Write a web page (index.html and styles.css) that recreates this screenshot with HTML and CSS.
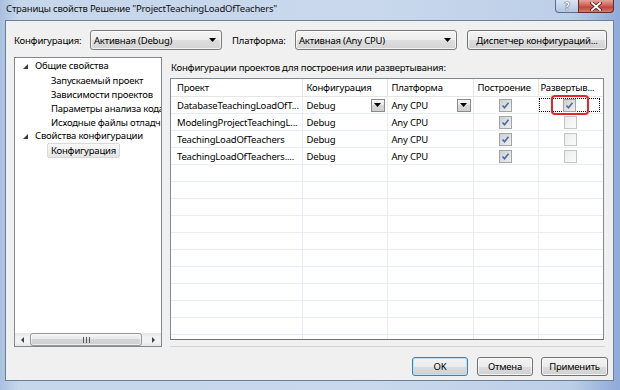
FILE: index.html
```html
<!DOCTYPE html>
<html lang="ru">

<head>
    <meta charset="UTF-8">
    <meta name="viewport" content="width=device-width, initial-scale=1.0">
    <title>Страницы свойств</title>
    <link rel="stylesheet" href="styles.css">
</head>

<body>
    <div class="window">
        <div class="titlebar">
            <span class="title">Страницы свойств Решение "ProjectTeachingLoadOfTeachers"</span>
            <div class="caption">
                <span class="cap-btn cap-help">?</span>
                <span class="cap-btn cap-close">
                    <svg width="12" height="9" viewBox="0 0 12 9">
                        <path d="M2 1 L10 8 M10 1 L2 8" stroke="#4a1f1a" stroke-width="3.4" stroke-linecap="square" />
                        <path d="M2 1 L10 8 M10 1 L2 8" stroke="#fff" stroke-width="1.8" stroke-linecap="square" />
                    </svg>
                </span>
            </div>
        </div>

        <div class="client">
            <div class="toolbar">
                <label class="lbl lbl-config">Конфигурация:</label>
                <div class="combo combo-config">
                    <span>Активная (Debug)</span>
                    <svg class="arrow" width="7" height="4" viewBox="0 0 7 4"><path d="M0 0 H7 L3.5 4Z" fill="#000" /></svg>
                </div>
                <label class="lbl lbl-platform">Платформа:</label>
                <div class="combo combo-platform">
                    <span>Активная (Any CPU)</span>
                    <svg class="arrow" width="7" height="4" viewBox="0 0 7 4"><path d="M0 0 H7 L3.5 4Z" fill="#000" /></svg>
                </div>
                <button class="btn btn-manager">Диспетчер конфигураций...</button>
            </div>

            <div class="main">
                <div class="tree">
                    <ul class="tree-list">
                        <li class="tree-item level-1">
                            <svg class="expander" width="5" height="5" viewBox="0 0 5 5"><path d="M5 0 V5 H0Z" fill="#3b3b3b" /></svg>
                            Общие свойства
                        </li>
                        <li class="tree-item level-2"><span>Запускаемый проект</span></li>
                        <li class="tree-item level-2"><span>Зависимости проектов</span></li>
                        <li class="tree-item level-2"><span>Параметры анализа кода</span></li>
                        <li class="tree-item level-2"><span>Исходные файлы отладчика</span></li>
                        <li class="tree-item level-1">
                            <svg class="expander" width="5" height="5" viewBox="0 0 5 5"><path d="M5 0 V5 H0Z" fill="#3b3b3b" /></svg>
                            Свойства конфигурации
                        </li>
                        <li class="tree-item level-2"><span class="selected">Конфигурация</span></li>
                    </ul>
                    <div class="hscroll">
                        <span class="scroll-btn">
                            <svg width="3" height="6" viewBox="0 0 3 6"><path d="M3 0 V6 L0 3Z" fill="#404040" /></svg>
                        </span>
                        <span class="scroll-thumb">
                            <svg width="7" height="6" viewBox="0 0 7 6"><path d="M0.5 0 V6 M3.5 0 V6 M6.5 0 V6" stroke="#5a5a5a" stroke-width="1" /></svg>
                        </span>
                        <span class="scroll-gap"></span>
                        <span class="scroll-btn">
                            <svg width="3" height="6" viewBox="0 0 3 6"><path d="M0 0 V6 L3 3Z" fill="#404040" /></svg>
                        </span>
                    </div>
                </div>

                <div class="panel">
                    <div class="panel-caption">Конфигурации проектов для построения или развертывания:</div>
                    <div class="grid">
                        <table>
                            <colgroup>
                                <col class="col-project">
                                <col class="col-config">
                                <col class="col-platform">
                                <col class="col-build">
                                <col class="col-deploy">
                            </colgroup>
                            <thead>
                                <tr>
                                    <th class="first">Проект</th>
                                    <th>Конфигурация</th>
                                    <th>Платформа</th>
                                    <th>Построение</th>
                                    <th class="narrow">Развертыв...</th>
                                </tr>
                            </thead>
                            <tbody>
                                <tr>
                                    <td class="first">DatabaseTeachingLoadOfT...</td>
                                    <td>
                                        <div class="cell-combo">Debug
                                            <span class="drop-btn"><svg width="7" height="4" viewBox="0 0 7 4"><path d="M0 0 H7 L3.5 4Z" fill="#000" /></svg></span>
                                        </div>
                                    </td>
                                    <td>
                                        <div class="cell-combo">Any CPU
                                            <span class="drop-btn"><svg width="7" height="4" viewBox="0 0 7 4"><path d="M0 0 H7 L3.5 4Z" fill="#000" /></svg></span>
                                        </div>
                                    </td>
                                    <td class="center"><span class="check checked"><svg width="11" height="11" viewBox="0 0 11 11"><path d="M2.5 5.5 L4.5 7.8 L8.5 2.8" fill="none" stroke="#4b68a8" stroke-width="1.6" /></svg></span></td>
                                    <td class="center">
                                        <span class="focus"><span class="check checked"><svg width="11" height="11" viewBox="0 0 11 11"><path d="M2.5 5.5 L4.5 7.8 L8.5 2.8" fill="none" stroke="#4b68a8" stroke-width="1.6" /></svg></span></span>
                                    </td>
                                </tr>
                                <tr>
                                    <td class="first">ModelingProjectTeachingL...</td>
                                    <td>Debug</td>
                                    <td>Any CPU</td>
                                    <td class="center"><span class="check checked"><svg width="11" height="11" viewBox="0 0 11 11"><path d="M2.5 5.5 L4.5 7.8 L8.5 2.8" fill="none" stroke="#4b68a8" stroke-width="1.6" /></svg></span></td>
                                    <td class="center"><span class="check"></span></td>
                                </tr>
                                <tr>
                                    <td class="first">TeachingLoadOfTeachers</td>
                                    <td>Debug</td>
                                    <td>Any CPU</td>
                                    <td class="center"><span class="check checked"><svg width="11" height="11" viewBox="0 0 11 11"><path d="M2.5 5.5 L4.5 7.8 L8.5 2.8" fill="none" stroke="#4b68a8" stroke-width="1.6" /></svg></span></td>
                                    <td class="center"><span class="check"></span></td>
                                </tr>
                                <tr>
                                    <td class="first">TeachingLoadOfTeachers....</td>
                                    <td>Debug</td>
                                    <td>Any CPU</td>
                                    <td class="center"><span class="check checked"><svg width="11" height="11" viewBox="0 0 11 11"><path d="M2.5 5.5 L4.5 7.8 L8.5 2.8" fill="none" stroke="#4b68a8" stroke-width="1.6" /></svg></span></td>
                                    <td class="center"><span class="check"></span></td>
                                </tr>
                                <tr class="empty"><td></td><td></td><td></td><td></td><td></td></tr>
                                <tr class="empty"><td></td><td></td><td></td><td></td><td></td></tr>
                                <tr class="empty"><td></td><td></td><td></td><td></td><td></td></tr>
                                <tr class="empty"><td></td><td></td><td></td><td></td><td></td></tr>
                                <tr class="empty"><td></td><td></td><td></td><td></td><td></td></tr>
                                <tr class="empty"><td></td><td></td><td></td><td></td><td></td></tr>
                                <tr class="empty"><td></td><td></td><td></td><td></td><td></td></tr>
                                <tr class="empty"><td></td><td></td><td></td><td></td><td></td></tr>
                                <tr class="empty"><td></td><td></td><td></td><td></td><td></td></tr>
                                <tr class="empty"><td></td><td></td><td></td><td></td><td></td></tr>
                                <tr class="empty"><td></td><td></td><td></td><td></td><td></td></tr>
                            </tbody>
                        </table>
                        <div class="highlight"></div>
                    </div>
                </div>
            </div>

            <div class="footer">
                <button class="btn btn-ok">OK</button>
                <button class="btn btn-cancel">Отмена</button>
                <button class="btn btn-apply">Применить</button>
            </div>
        </div>
    </div>
</body>

</html>
```

FILE: styles.css
```css
body {
    margin: 0;
    padding: 0;
    font-family: "Noto Sans", "Open Sans", sans-serif;
    font-size: 9.5px;
    letter-spacing: -0.2px;
    color: #000;
    background: #fff;
}

.window {
    width: 620px;
    height: 390px;
    display: flex;
    flex-direction: column;
    overflow: hidden;
    background: linear-gradient(90deg, #a9c0e0 0%, #c6d6eb 3%, #c9d8ec 60%, #bccfe8 92%, #8faad8 100%);
}

/* title bar */
.titlebar {
    height: 20px;
    display: flex;
    align-items: flex-start;
    padding-left: 6px;
}

.title {
    margin-top: 3px;
    line-height: 12px;
    color: #111;
}

.caption {
    margin-left: auto;
    margin-right: 6px;
    display: flex;
    height: 13px;
}

.cap-btn {
    box-sizing: border-box;
    height: 13px;
    display: flex;
    align-items: center;
    justify-content: center;
    border: 1px solid #5b6f8c;
    border-top: none;
}

.cap-help {
    width: 23px;
    border-radius: 0 0 0 4px;
    border-right: none;
    background: linear-gradient(#d9e4f2, #c3d3e9 55%, #b2c6e2);
    color: #fff;
    font-weight: bold;
    font-size: 10px;
    text-shadow: 0 0 1px #334, 0 0 1px #334;
}

.cap-close {
    width: 36px;
    border-radius: 0 0 4px 0;
    border-color: #6a2b24;
    background: linear-gradient(#e1a59b, #cf6257 45%, #c3453a 60%, #d8796c);
}

/* client area */
.client {
    box-sizing: border-box;
    height: 361px;
    margin: 0 6px 0 5px;
    border: 1px solid #6c7f98;
    background: #f0f0f0;
    padding: 9px 5px 0 8px;
    display: flex;
    flex-direction: column;
}

.toolbar {
    display: flex;
    align-items: center;
    height: 20px;
    padding-right: 1px;
}

.lbl-config {
    width: 76px;
}

.lbl-platform {
    width: 63px;
    margin-left: 10px;
}

.combo {
    box-sizing: border-box;
    height: 20px;
    display: flex;
    align-items: center;
    justify-content: space-between;
    padding: 0 5px 0 3px;
    border: 1px solid #7a7a7a;
    border-radius: 3px;
    background: linear-gradient(#f4f4f4, #ececec 50%, #dfdfdf 50%, #d3d3d3);
    box-shadow: inset 0 0 0 1px rgba(255, 255, 255, 0.7);
}

.combo-config {
    width: 132px;
}

.combo-platform {
    width: 162px;
}

.btn {
    box-sizing: border-box;
    height: 19px;
    padding: 0;
    font: inherit;
    letter-spacing: inherit;
    color: #000;
    border: 1px solid #707070;
    border-radius: 3px;
    background: linear-gradient(#f3f3f3, #ebebeb 50%, #dddddd 50%, #d0d0d0);
    box-shadow: inset 0 0 0 1px rgba(255, 255, 255, 0.75);
}

.btn-manager {
    width: 140px;
    height: 20px;
    margin-left: 10px;
}

/* tree + grid */
.main {
    display: flex;
    height: 290px;
    margin-top: 7px;
}

.tree {
    box-sizing: border-box;
    width: 148px;
    border: 1px solid #828790;
    background: #fff;
    display: flex;
    flex-direction: column;
    overflow: hidden;
}

.tree-list {
    flex: 1;
    margin: 0;
    padding: 1px 0 0 0;
    list-style: none;
    white-space: nowrap;
}

.tree-item {
    height: 14px;
    line-height: 14px;
    display: flex;
    align-items: center;
}

.level-1 {
    padding-left: 8px;
}

.expander {
    margin-right: 7px;
}

.level-2 {
    padding-left: 32px;
}

.level-2 span {
    padding: 0 3px;
    line-height: 13px;
    border: 1px solid transparent;
    border-radius: 2px;
}

.level-2 .selected {
    border-color: #d9d9d9;
    background: linear-gradient(#f8f8f8, #e5e5e5);
}

.hscroll {
    height: 13px;
    display: flex;
    background: linear-gradient(#e4e4e4, #f2f2f2 30%, #f2f2f2 70%, #e6e6e6);
}

.scroll-btn {
    width: 15px;
    display: flex;
    align-items: center;
    justify-content: center;
}

.scroll-thumb {
    box-sizing: border-box;
    width: 112px;
    display: flex;
    align-items: center;
    justify-content: center;
    border: 1px solid #979797;
    border-radius: 3px;
    background: linear-gradient(#f4f4f4, #e8e8e8 50%, #d6d6d6 50%, #cfcfcf);
    box-shadow: inset 0 0 0 1px rgba(255, 255, 255, 0.6);
}

.scroll-gap {
    width: 4px;
}

.panel {
    flex: 1;
    margin: 0 3px 0 8px;
    border-bottom: 1px solid #d5d5d5;
    display: flex;
    flex-direction: column;
}

.panel-caption {
    padding: 4px 0 0 1px;
    line-height: 14px;
    white-space: nowrap;
}

.grid {
    position: relative;
    box-sizing: border-box;
    width: 434px;
    height: 262px;
    margin-top: 3px;
    border: 1px solid #828790;
    border-bottom-color: #6e7178;
    background: #fff;
    overflow: hidden;
}

.grid table {
    width: 432px;
    border-collapse: collapse;
    table-layout: fixed;
}

.col-project {
    width: 131px;
}

.col-config {
    width: 85px;
}

.col-platform {
    width: 86px;
}

.col-build {
    width: 65px;
}

.col-deploy {
    width: 65px;
}

.grid th,
.grid td {
    height: 16px;
    padding: 0 0 0 4px;
    border-right: 1px solid #e6edf5;
    border-bottom: 1px solid #e8edf2;
    text-align: left;
    font-weight: normal;
    white-space: nowrap;
    overflow: hidden;
}

.grid th {
    height: 17px;
    border-right-color: #e3e3e3;
    border-bottom-color: #e6e6e6;
}

.grid th.narrow {
    padding-left: 2px;
}

.grid .first {
    padding-left: 6px;
}

.grid td.center {
    padding: 0;
    text-align: center;
}

.cell-combo {
    display: flex;
    align-items: center;
    justify-content: space-between;
    padding-right: 2px;
}

.drop-btn {
    box-sizing: border-box;
    width: 14px;
    height: 13px;
    display: flex;
    align-items: center;
    justify-content: center;
    border: 1px solid #8a8a8a;
    background: linear-gradient(#f6f6f6, #e6e6e6 50%, #d8d8d8 50%, #d0d0d0);
}

.check {
    box-sizing: border-box;
    width: 13px;
    height: 13px;
    display: inline-flex;
    align-items: center;
    justify-content: center;
    vertical-align: middle;
    border: 1px solid #c5c5c5;
    background: linear-gradient(135deg, #ececec, #fbfbfb);
}

.check.checked {
    border-color: #a3a3a3;
    background: linear-gradient(135deg, #cfcfcf, #efefef);
}

.focus {
    box-sizing: border-box;
    width: 61px;
    height: 14px;
    margin-left: -3px;
    display: inline-flex;
    align-items: center;
    justify-content: center;
    vertical-align: middle;
    border: 1px dotted #000;
}

/* red mark drawn over the deploy checkbox */
.highlight {
    position: absolute;
    left: 380px;
    top: 16px;
    width: 38px;
    height: 20px;
    box-sizing: border-box;
    border: 2px solid #e2262a;
    border-radius: 4px;
}

.footer {
    display: flex;
    justify-content: flex-end;
    margin-top: 10px;
}

.btn-ok {
    width: 56px;
    border-color: #3c7fb1;
    box-shadow: inset 0 0 0 1px #bfe2f7;
}

.btn-cancel {
    width: 56px;
    margin-left: 9px;
}

.btn-apply {
    width: 67px;
    margin-left: 8px;
}
```
